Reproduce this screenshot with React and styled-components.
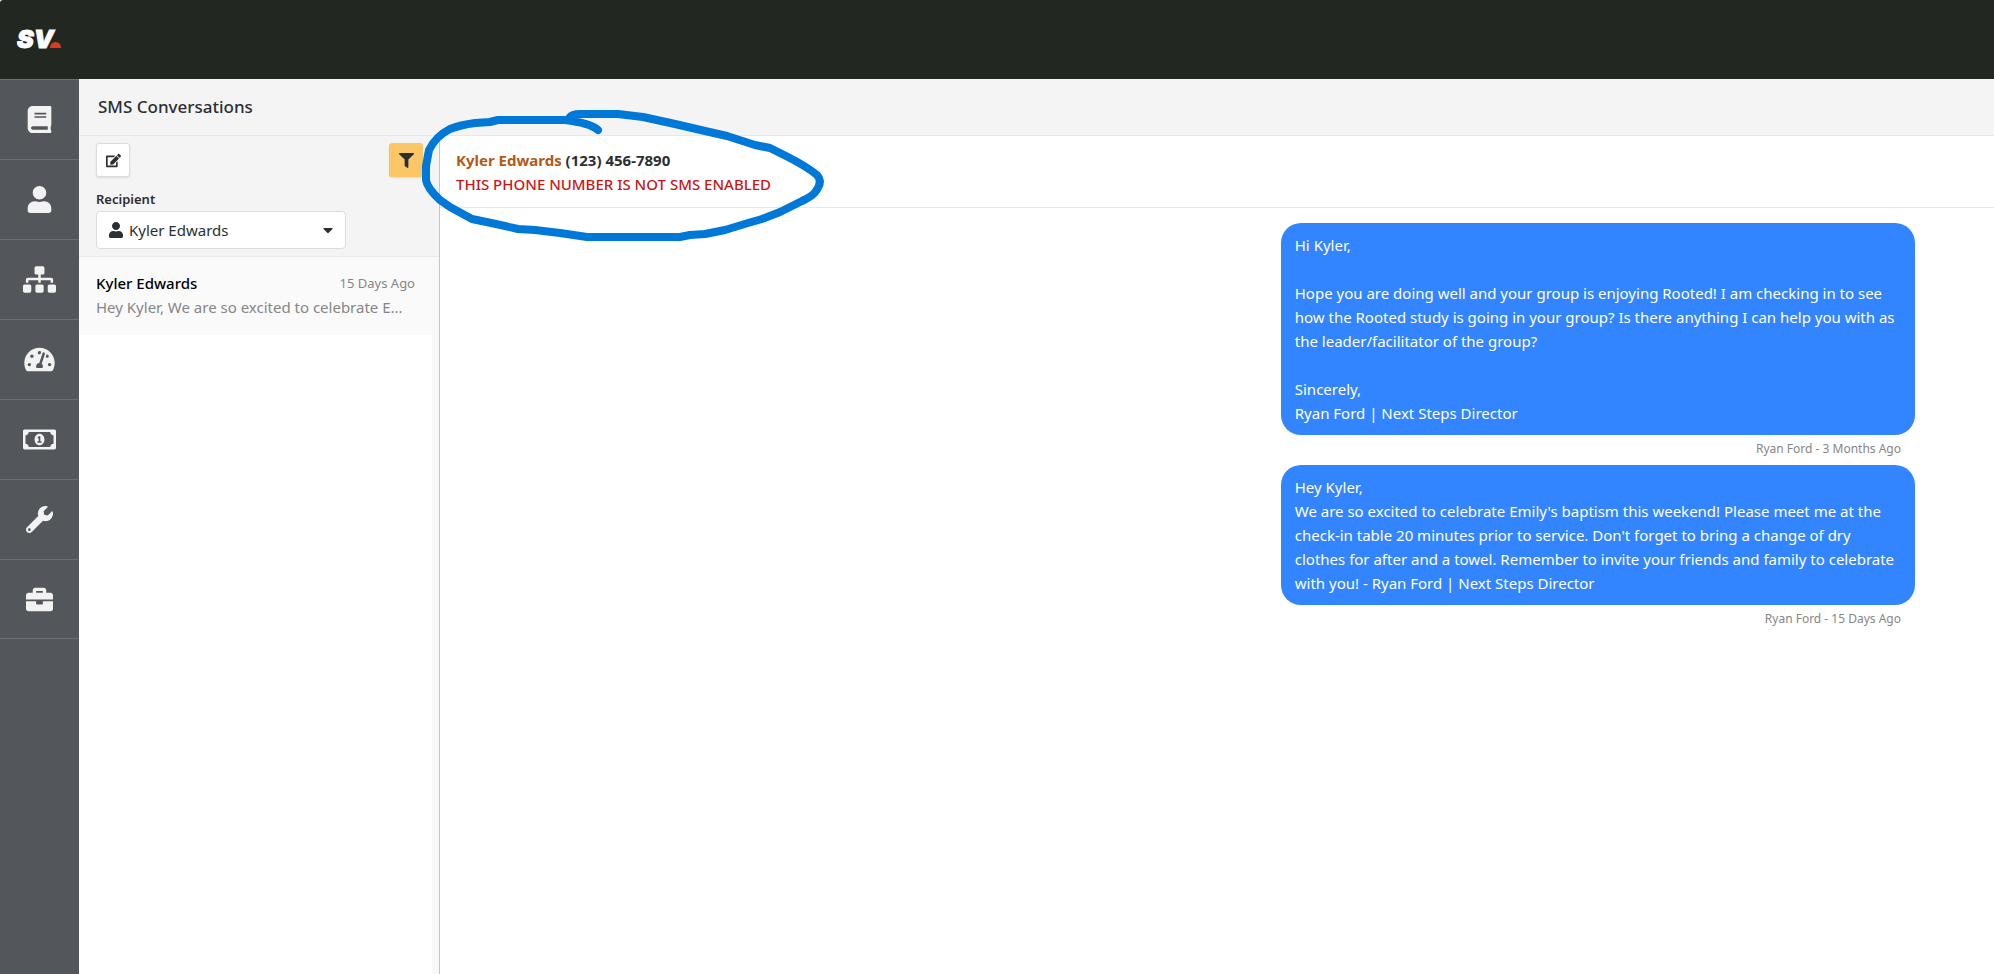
import React from 'react';
import styled, { createGlobalStyle, ThemeProvider } from 'styled-components';
import {
  FaBook,
  FaUser,
  FaSitemap,
  FaTachometerAlt,
  FaRegMoneyBillAlt,
  FaWrench,
  FaBriefcase,
  FaEdit,
  FaFilter,
  FaCaretDown,
} from 'react-icons/fa';

const theme = {
  colors: {
    topbar: '#222821',
    rail: '#53565b',
    railLine: '#6b6e72',
    panel: '#f4f4f4',
    line: '#e6e8ea',
    text: '#2b2f33',
    muted: '#868686',
    bubble: '#3385ff',
    amber: '#fac666',
    brown: '#b35a14',
    danger: '#c81818',
    marker: '#0078d7',
  },
};

const GlobalStyle = createGlobalStyle`
  * {
    box-sizing: border-box;
  }

  body {
    margin: 0;
    background: #fff;
    color: ${({ theme }) => theme.colors.text};
    font-family: 'Noto Sans', 'Open Sans', sans-serif;
    font-size: 15px;
    line-height: 24px;
  }

  button, select {
    font: inherit;
    color: inherit;
  }
`;

const Page = styled.div`
  min-height: 100vh;
  display: grid;
  grid-template-columns: 79px 1fr;
  grid-template-rows: 79px 1fr;
`;

const Topbar = styled.header`
  grid-column: 1 / -1;
  display: flex;
  align-items: center;
  padding: 0 17px 2px;
  background: ${({ theme }) => theme.colors.topbar};
  border-top-left-radius: 3px;
`;

const Logo = styled.a`
  display: flex;
  align-items: baseline;
  color: #fff;
  font-family: Inter, sans-serif;
  font-size: 25px;
  font-weight: 900;
  font-style: italic;
  text-decoration: none;
  -webkit-text-stroke: 1px #fff;
`;

const LogoDot = styled.span`
  width: 11px;
  height: 6px;
  margin-left: -4px;
  border-radius: 6px 6px 0 0;
  background: #dd3a22;
`;

const Rail = styled.nav`
  background: ${({ theme }) => theme.colors.rail};
`;

const RailLink = styled.a`
  height: 80px;
  display: flex;
  align-items: center;
  justify-content: center;
  border-top: 1px solid ${({ theme }) => theme.colors.railLine};
  color: #f2f2f2;

  &:last-child {
    border-bottom: 1px solid ${({ theme }) => theme.colors.railLine};
  }

  & svg {
    width: 33px;
    height: 27px;
  }
`;

const Main = styled.main`
  display: flex;
  flex-direction: column;
  min-width: 0;
`;

const TitleBar = styled.div`
  height: 57px;
  display: flex;
  align-items: center;
  padding: 0 19px;
  background: ${({ theme }) => theme.colors.panel};
  border-bottom: 1px solid ${({ theme }) => theme.colors.line};
`;

const Title = styled.h1`
  margin: 0;
  font-size: 17px;
  font-weight: 500;
`;

const Columns = styled.div`
  flex: 1;
  display: grid;
  grid-template-columns: 361px 1fr;
`;

const Sidebar = styled.aside`
  display: flex;
  flex-direction: column;
  border-right: 1px solid #c4c4c4;
`;

const Filters = styled.div`
  padding: 7px 16px 7px 17px;
  background: ${({ theme }) => theme.colors.panel};
  border-bottom: 1px solid ${({ theme }) => theme.colors.line};
`;

const Toolbar = styled.div`
  display: flex;
  justify-content: space-between;
  margin-bottom: 10px;
`;

const IconButton = styled.button`
  width: 34px;
  height: 34px;
  display: flex;
  align-items: center;
  justify-content: center;
  padding: 0;
  border: 1px solid ${({ $active, theme }) => ($active ? theme.colors.amber : '#dcdcdc')};
  border-radius: 3px;
  background: ${({ $active, theme }) => ($active ? theme.colors.amber : '#fff')};
  box-shadow: 0 1px 2px rgba(0, 0, 0, 0.1);
`;

const Label = styled.label`
  display: block;
  font-size: 13px;
  font-weight: 600;
`;

const SelectBox = styled.div`
  width: 250px;
  height: 38px;
  display: flex;
  align-items: center;
  gap: 5px;
  padding: 0 9px 0 11px;
  border: 1px solid #dcdcdc;
  border-radius: 4px;
  background: #fff;
  font-size: 16px;
`;

const Select = styled.select`
  flex: 1;
  min-width: 0;
  padding: 0;
  border: 0;
  appearance: none;
  background: transparent;
  font-size: 15px;
`;

const ListWrap = styled.div`
  flex: 1;
  padding-right: 7px;
  background: #f9f9f9;
`;

const List = styled.ul`
  height: 100%;
  margin: 0;
  padding: 0;
  list-style: none;
  background: #fff;
`;

const Conversation = styled.li`
  padding: 14px 17px 16px;
  background: #fafafa;
`;

const ConversationTop = styled.div`
  display: flex;
  justify-content: space-between;
  color: #000;
  font-weight: 500;
`;

const Time = styled.time`
  color: ${({ theme }) => theme.colors.muted};
  font-size: 13px;
  font-weight: 400;
`;

const Preview = styled.p`
  margin: 0;
  white-space: nowrap;
  color: ${({ theme }) => theme.colors.muted};
`;

const Thread = styled.section`
  min-width: 0;
`;

const ThreadHeader = styled.div`
  position: relative;
  height: 72px;
  padding: 12px 16px;
  border-bottom: 1px solid ${({ theme }) => theme.colors.line};
`;

const Contact = styled.div`
  font-weight: 700;
`;

const ContactLink = styled.a`
  color: ${({ theme }) => theme.colors.brown};
  text-decoration: none;
`;

const Warning = styled.div`
  color: ${({ theme }) => theme.colors.danger};
  font-weight: 500;
`;

/* hand drawn ring around the contact details */
const Marker = styled.svg`
  position: absolute;
  left: -40px;
  top: -36px;
  width: 440px;
  height: 150px;
  pointer-events: none;
  fill: none;
  stroke: ${({ theme }) => theme.colors.marker};
  stroke-width: 8;
  stroke-linecap: round;
  stroke-linejoin: round;
`;

const Messages = styled.div`
  display: flex;
  flex-direction: column;
  align-items: flex-end;
  padding: 15px 79px 0 0;
`;

const Message = styled.article`
  width: 43%;
`;

const Bubble = styled.div`
  padding: 10px 14px;
  border-radius: 20px;
  background: ${({ theme }) => theme.colors.bubble};
  color: #fff;
  white-space: pre-line;
`;

const Meta = styled.div`
  height: 30px;
  padding: 2px 14px 0 0;
  color: ${({ theme }) => theme.colors.muted};
  font-size: 12px;
  text-align: right;
`;

const links = [
  { label: 'Library', Icon: FaBook },
  { label: 'People', Icon: FaUser },
  { label: 'Groups', Icon: FaSitemap },
  { label: 'Dashboard', Icon: FaTachometerAlt },
  { label: 'Finance', Icon: FaRegMoneyBillAlt },
  { label: 'Tools', Icon: FaWrench },
  { label: 'Admin', Icon: FaBriefcase },
];

const messages = [
  {
    text: `Hi Kyler,

Hope you are doing well and your group is enjoying Rooted! I am checking in to see how the Rooted study is going in your group? Is there anything I can help you with as the leader/facilitator of the group?

Sincerely,
Ryan Ford | Next Steps Director`,
    meta: 'Ryan Ford - 3 Months Ago',
  },
  {
    text: `Hey Kyler,
We are so excited to celebrate Emily's baptism this weekend! Please meet me at the check-in table 20 minutes prior to service. Don't forget to bring a change of dry clothes for after and a towel. Remember to invite your friends and family to celebrate with you! - Ryan Ford | Next Steps Director`,
    meta: 'Ryan Ford - 15 Days Ago',
  },
];

function App() {
  return (
    <ThemeProvider theme={theme}>
      <GlobalStyle />
      <Page>
        <Topbar>
          <Logo href="#">
            SV
            <LogoDot />
          </Logo>
        </Topbar>

        <Rail>
          {links.map(({ label, Icon }) => (
            <RailLink key={label} href="#" aria-label={label}>
              <Icon />
            </RailLink>
          ))}
        </Rail>

        <Main>
          <TitleBar>
            <Title>SMS Conversations</Title>
          </TitleBar>

          <Columns>
            <Sidebar>
              <Filters>
                <Toolbar>
                  <IconButton type="button" aria-label="New message">
                    <FaEdit />
                  </IconButton>
                  <IconButton type="button" aria-label="Filter" $active>
                    <FaFilter />
                  </IconButton>
                </Toolbar>
                <Label htmlFor="recipient">Recipient</Label>
                <SelectBox>
                  <FaUser />
                  <Select id="recipient" defaultValue="kyler">
                    <option value="kyler">Kyler Edwards</option>
                  </Select>
                  <FaCaretDown />
                </SelectBox>
              </Filters>

              <ListWrap>
                <List>
                  <Conversation>
                    <ConversationTop>
                      <span>Kyler Edwards</span>
                      <Time>15 Days Ago</Time>
                    </ConversationTop>
                    <Preview>Hey Kyler, We are so excited to celebrate E...</Preview>
                  </Conversation>
                </List>
              </ListWrap>
            </Sidebar>

            <Thread>
              <ThreadHeader>
                <Contact>
                  <ContactLink href="#">Kyler Edwards</ContactLink> (123) 456-7890
                </Contact>
                <Warning>THIS PHONE NUMBER IS NOT SMS ENABLED</Warning>
                <Marker viewBox="0 0 440 150" aria-hidden="true">
                  <path d="M198 30 Q190 23 165 20 H98 L90 22 L75 23 Q60 25 50 29 Q36 36 29 50 L26 66 L26 80 Q27 88 40 100 L50 107 L72 119 L96 124 L118 129 L135 130 L160 133 L187 137 H280 L290 135 L305 134 L325 130 L348 123 L362 119 L380 112 L402 101 Q413 96 416 91 Q423 82 417 75 Q406 66 386 56 L370 48 L355 45 L327 36 L305 31 L275 24 L243 17 L218 14 H180 Q172 14 170 17" />
                </Marker>
              </ThreadHeader>

              <Messages>
                {messages.map((message) => (
                  <Message key={message.meta}>
                    <Bubble>{message.text}</Bubble>
                    <Meta>{message.meta}</Meta>
                  </Message>
                ))}
              </Messages>
            </Thread>
          </Columns>
        </Main>
      </Page>
    </ThemeProvider>
  );
}

export default App;
